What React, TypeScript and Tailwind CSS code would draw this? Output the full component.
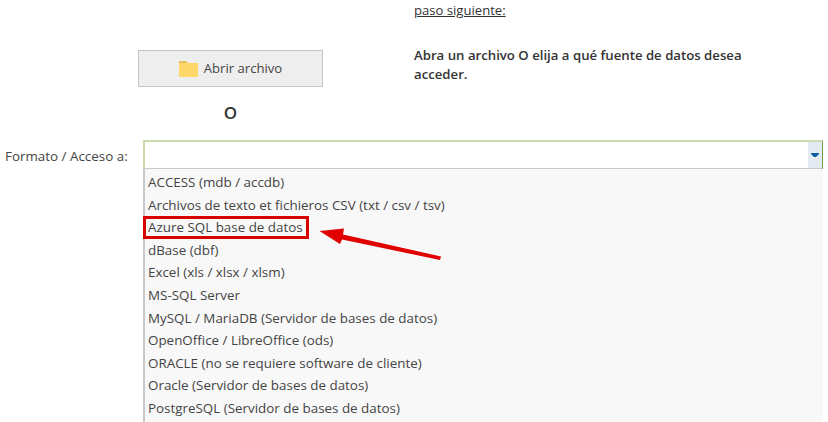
const options = [
  'ACCESS (mdb / accdb)',
  'Archivos de texto et fichieros CSV (txt / csv / tsv)',
  'Azure SQL base de datos',
  'dBase (dbf)',
  'Excel (xls / xlsx / xlsm)',
  'MS-SQL Server',
  'MySQL / MariaDB (Servidor de bases de datos)',
  'OpenOffice / LibreOffice (ods)',
  'ORACLE (no se requiere software de cliente)',
  'Oracle (Servidor de bases de datos)',
  'PostgreSQL (Servidor de bases de datos)',
];

function FolderIcon() {
  return (
    <svg width="19" height="16" viewBox="0 0 19 16" className="mr-[6px]">
      <path d="M0 0 H7 L9 2 H19 V5 H0 Z" fill="#e8bd5a" />
      <rect x="0" y="2" width="19" height="14" fill="#fdd868" />
    </svg>
  );
}

export default function App() {
  return (
    <div className="relative h-[422px] w-[828px] overflow-hidden bg-white font-['Open_Sans',sans-serif] text-[13.4px] text-[#444]">
      <div className="flex h-[140px]">
        <div className="ml-[138px] flex w-[185px] flex-col items-center pt-[50px]">
          <button className="flex h-[37px] w-full items-center justify-center border border-[#c4c4c4] bg-[#eeeeee] text-[13.1px] text-[#444]">
            <FolderIcon />
            Abrir archivo
          </button>
          <div className="mt-[15px] text-[17px] leading-[22px] font-semibold text-[#333]">O</div>
        </div>
        <div className="ml-[91px] w-[370px] text-[#333]">
          <div className="h-[46px] pt-px text-[13.1px] leading-[18px] underline">paso siguiente:</div>
          <p className="text-[13.2px] leading-[19px] font-semibold">Abra un archivo O elija a qué fuente de datos desea acceder.</p>
        </div>
      </div>

      <div className="flex">
        <div className="ml-[5px] w-[138px] pt-[7px] leading-[18px]">Formato / Acceso a:</div>
        <div className="w-[680px]">
          <div className="flex h-[29px] border-t-2 border-r border-b border-l-2 border-t-[#c9dcb0] border-r-[#6aa63c] border-b-[#c8c8c8] border-l-[#c9dcb0] bg-white">
            <div className="flex-1" />
            <div className="flex w-[14px] items-center justify-center bg-[#e4eaf2]">
              <svg width="8" height="4" viewBox="0 0 8 4">
                <path d="M0 0 H8 V1 L5 4 H3 L0 1 Z" fill="#0f5a9c" />
              </svg>
            </div>
          </div>
          <ul className="h-[260px] border-l-2 border-[#c8c8c8] bg-[#f8f8f8] pt-[2px]">
            {options.map((o) => (
              <li key={o} className="pl-[3px] leading-[22.6px] whitespace-nowrap">{o}</li>
            ))}
          </ul>
        </div>
      </div>

      {/* callout over the list */}
      <div className="absolute top-[216px] left-[143px] h-[23px] w-[166px] border-[3px] border-[#d90000]" />
      <svg className="absolute top-[225px] left-[318px]" width="126" height="36" viewBox="0 0 126 36">
        <path d="M1.5 6 L26 3.5 L25 9.5 L123 31.5 L122 35 L24 14.5 L22 19 Z" fill="#e00000" />
      </svg>
    </div>
  );
}
